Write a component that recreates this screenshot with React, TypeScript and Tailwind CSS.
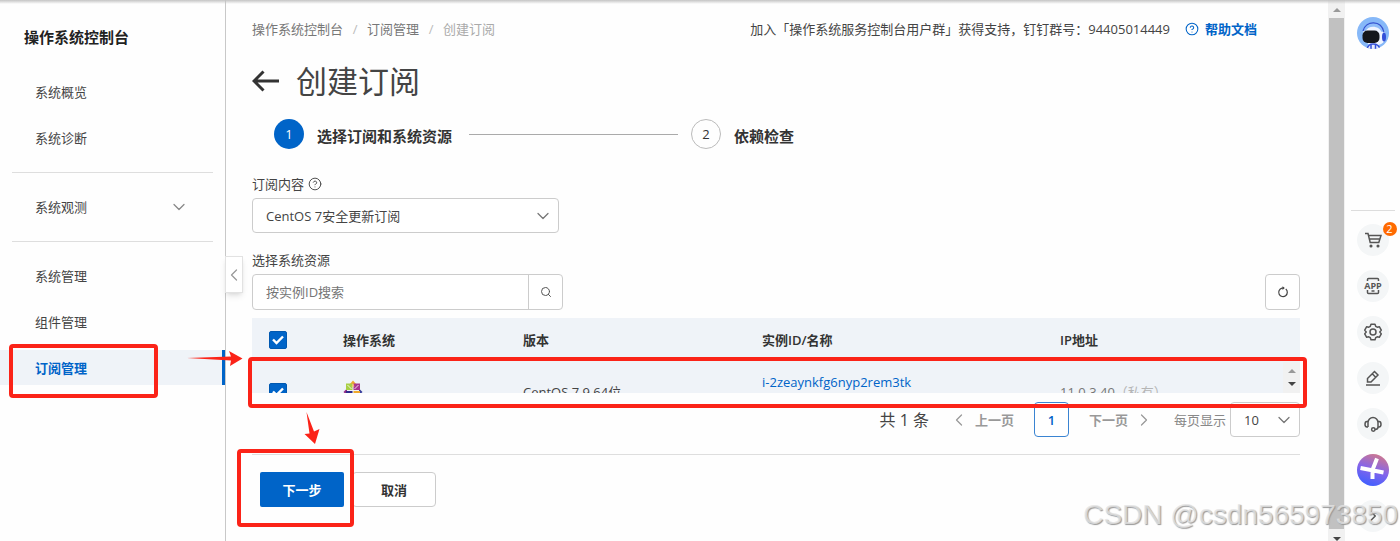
import React, { useState } from "react";
import { ChevronDown, ChevronLeft, ChevronRight, CircleHelp, Search } from "lucide-react";

const navGroups = [
  [{ label: "系统概览" }, { label: "系统诊断" }],
  [{ label: "系统观测", expandable: true }],
  [{ label: "系统管理" }, { label: "组件管理" }, { label: "订阅管理", active: true }],
];

const instances = [
  { id: "i-2zeaynkfg6nyp2rem3tk", version: "CentOS 7.9 64位", ip: "11.0.3.40", scope: "\uFF08私有\uFF09" },
];

const supportNotice = "加入「操作系统服务控制台用户群」获得支持\uFF0C钉钉群号\uFF1A94405014449";

const Sidebar: React.FC = () => (
  <aside className="relative w-[226px] shrink-0 border-r border-[#c8c8c8] pt-[25px]">
    <h2 className="pl-6 text-[15px] font-bold leading-6 text-[#222]">操作系统控制台</h2>
    <nav className="mt-[25px]">
      {navGroups.map((group: any[], index) => (
        <div key={index}>
          {index > 0 && <hr className="mx-3 mb-4 mt-[17px] border-[#dedede]" />}
          <ul className="flex flex-col gap-[11px]">
            {group.map((item) => (
              <li key={item.label} className="relative">
                <a
                  href="#"
                  className={`flex h-[35px] items-center justify-between pl-[35px] pr-9 ${
                    item.active
                      ? "border-r-[3px] border-[#0064c8] bg-[#eff3f8] font-bold text-[#0064c8]"
                      : "text-[#444]"
                  }`}
                >
                  {item.label}
                  {item.expandable && <ChevronDown size={20} strokeWidth={1.5} className="text-[#888]" />}
                </a>
                {item.active && (
                  <>
                    <div className="pointer-events-none absolute -top-1.5 left-[9px] h-[54px] w-[149px] rounded border-4 border-[#fb2318]" />
                    <svg className="pointer-events-none absolute left-[187px] top-0 z-20" width="56" height="18" viewBox="0 0 56 18">
                      <path d="M0 8 L44 6.5 L42 1 L55.5 8.5 L43 16 L44 10.5 Z" fill="#fb2318" />
                    </svg>
                  </>
                )}
              </li>
            ))}
          </ul>
        </div>
      ))}
    </nav>
    <button
      aria-label="收起"
      className="absolute left-[225px] top-64 z-10 flex h-[37px] w-[18px] items-center justify-center border border-[#e2e2e2] bg-white text-[#999] shadow-md"
    >
      <ChevronLeft size={20} strokeWidth={1.5} className="shrink-0" />
    </button>
  </aside>
);

const Checkbox: React.FC<{ label: string }> = ({ label }) => (
  <label className="grid w-[18px]">
    <input
      type="checkbox"
      aria-label={label}
      defaultChecked
      className="peer col-start-1 row-start-1 h-[18px] w-[18px] appearance-none rounded-[2px] border border-[#999] checked:border-[#0058b0] checked:bg-[#0064c8]"
    />
    <svg className="pointer-events-none invisible col-start-1 row-start-1 peer-checked:visible" width="18" height="18" viewBox="0 0 18 18">
      <path d="M4 8.500 L7.500 12 L14 5.500" fill="none" stroke="#fff" strokeWidth="2.4" />
    </svg>
  </label>
);

const CentosLogo: React.FC = () => (
  <svg width="20" height="24" viewBox="0 0 20 24" aria-label="CentOS" role="img">
    <path d="M10 0.500l3.500 4h-7z" fill="#efa92e" />
    <path d="M0.500 12l3.500-3.500v7z" fill="#8f2a86" />
    <path d="M19.500 12l-3.500-3.500v7z" fill="#3a3f9c" />
    <path d="M10 23l3.500-3.500h-7z" fill="#9ccb3b" />
    <path d="M3 3.500h6.500v6.500H3z" fill="#a8cf45" />
    <path d="M10.500 3.500H17v6.500h-6.500z" fill="#a8348f" />
    <path d="M3 11h6.500v8.500H3z" fill="#2f2c8c" />
    <path d="M10.500 11H17v8.500h-6.500z" fill="#efa92e" />
    <path d="M4.500 5l4 4M15.500 5l-4 4" stroke="#fff" strokeWidth="0.8" />
    <path d="M10 3.500l1.500 3h-3z" fill="#f3c06a" />
  </svg>
);

const InstanceTable: React.FC = () => (
  <div className="relative mt-2">
    <div className="h-[75px] overflow-hidden bg-[#eff3f8]">
      <table className="w-full table-fixed text-left">
        <thead>
          <tr className="h-11 text-[#333]">
            <th className="w-[78px] pl-[17px]">
              <Checkbox label="全选" />
            </th>
            <th className="w-[180px] px-[13px] font-semibold">操作系统</th>
            <th className="w-[239px] px-[13px] font-semibold">版本</th>
            <th className="w-[298px] px-[13px] font-semibold">实例ID/名称</th>
            <th className="px-[13px] font-semibold">IP地址</th>
          </tr>
        </thead>
        <tbody>
          {instances.map((item) => (
            <tr key={item.id} className="h-[60px]">
              <td className="pl-[17px]">
                <Checkbox label={item.id} />
              </td>
              <td className="px-[13px]">
                <CentosLogo />
              </td>
              <td className="px-[13px]">{item.version}</td>
              <td className="px-[13px] pt-2.5 align-top">
                <a href="#" className="text-[#0064c8]">{item.id}</a>
              </td>
              <td className="px-[13px] text-[#777]">
                {item.ip}
                <span className="text-[#b5b5b5]">{item.scope}</span>
              </td>
            </tr>
          ))}
        </tbody>
      </table>
    </div>
    {/* list scrollbar */}
    <div className="absolute bottom-0 right-0 flex h-[31px] w-[17px] flex-col items-center justify-center gap-[9px] bg-[#f1f1f1]">
      <span className="border-x-4 border-b-4 border-x-transparent border-b-[#999]" />
      <span className="border-x-4 border-t-4 border-x-transparent border-t-[#444]" />
    </div>
    <div className="pointer-events-none absolute -left-1 -right-[7px] top-[39px] z-10 h-[51px] rounded border-4 border-[#fb2318]" />
    <svg className="pointer-events-none absolute left-[52px] top-[94px] z-10" width="16" height="33" viewBox="0 0 16 33">
      <path d="M2.500 0 L10 19.500 L15.500 17 L11 32 L0.500 22 L5.500 21.500 Z" fill="#fb2318" />
    </svg>
  </div>
);

const Pagination: React.FC = () => (
  <div className="mt-[9px] flex items-center justify-end">
    <span className="text-base">共 1 条</span>
    <button className="ml-5 flex items-center gap-1.5 font-semibold text-[#999]">
      <ChevronLeft size={20} strokeWidth={1.5} />
      上一页
    </button>
    <button className="ml-5 h-[35px] w-[35px] rounded-sm border border-[#3a84d2] bg-white font-semibold text-[#0064c8]">1</button>
    <button className="ml-5 flex items-center gap-1.5 font-semibold text-[#999]">
      下一页
      <ChevronRight size={20} strokeWidth={1.5} />
    </button>
    <label htmlFor="page-size" className="ml-5 text-[#888]">每页显示</label>
    <div className="relative ml-1">
      <select id="page-size" className="h-[35px] w-[70px] appearance-none rounded-sm border border-[#ccc] bg-white pl-[13px]">
        <option>10</option>
        <option>20</option>
      </select>
      <ChevronDown size={20} strokeWidth={1.5} className="pointer-events-none absolute right-1.5 top-2 text-[#777]" />
    </div>
  </div>
);

const PageScrollbar: React.FC = () => (
  <div className="flex w-[17px] shrink-0 flex-col items-center bg-[#f1f1f1] pb-1 pt-2">
    <span className="border-x-4 border-b-4 border-x-transparent border-b-[#999]" />
    <div className="mt-1.5 w-[15px] flex-1 bg-[#c1c1c1]" />
    <span className="-mb-1 mt-2 border-x-4 border-t-4 border-x-transparent border-t-[#444]" />
  </div>
);

const RailButton: React.FC<{ label: string; children: React.ReactNode }> = ({ label, children }) => (
  <button aria-label={label} className="relative flex h-8 w-8 items-center justify-center rounded-full bg-[#f4f6f7] text-[#555]">
    {children}
  </button>
);

const ToolRail: React.FC = () => (
  <aside className="flex w-[55px] shrink-0 flex-col items-center justify-between pb-[9px] pt-[17px]">
    <button aria-label="助手">
      <svg width="32" height="32" viewBox="0 0 32 32">
        <clipPath id="avatar">
          <circle cx="16" cy="16" r="16" />
        </clipPath>
        <g clipPath="url(#avatar)">
          <rect width="32" height="32" fill="#86b8f8" />
          <path d="M6 15C8 4 27 4 28 17v6c-3 6-12 7-17 4z" fill="#eef3ff" />
          <path d="M6 14C9 3 24 3 27 15" fill="#8fbcf9" stroke="#3552d0" strokeWidth="1.2" />
          <path d="M8 15C11 8 22 8 25 16z" fill="#eef3ff" />
          <ellipse cx="27" cy="20" rx="2" ry="4.500" fill="#3350d8" />
          <rect x="5.500" y="13.500" width="17" height="12.500" rx="5" fill="#15171c" />
          <path d="M10 32c1-4 3-5 6-5s6 1 7 5" fill="#e8ecff" stroke="#3350d8" strokeWidth="1.5" />
          <path d="M14 28v4M18.500 28v4" stroke="#3350d8" strokeWidth="1.5" />
        </g>
      </svg>
    </button>
    <div className="flex flex-col items-center gap-3.5 border-t border-[#ddd] px-1.5 pt-[13px]">
      <RailButton label="购物车">
        <svg width="18" height="18" viewBox="0 0 18 18" fill="none" stroke="currentColor" strokeWidth="1.5">
          <path d="M1 2.500h3l2.200 9h8.600L17 4.500H4.500M5.500 8h10.300" />
          <circle cx="7" cy="15" r="0.8" fill="currentColor" />
          <circle cx="14" cy="15" r="0.8" fill="currentColor" />
        </svg>
        <span className="absolute -right-2 -top-0.5 h-3.5 w-3.5 rounded-full bg-[#ff6a00] text-center text-[11px] leading-3.5 text-white">2</span>
      </RailButton>
      <RailButton label="移动端">
        <svg width="20" height="18" viewBox="0 0 20 18" fill="none" stroke="currentColor" strokeWidth="1.5">
          <path d="M4.500 4V2.500q0-1 1-1h9q1 0 1 1V4M4.500 13v2.500q0 1 1 1h9q1 0 1-1V13M8.500 14h3" />
          <text x="10" y="11.500" textAnchor="middle" fontSize="9" fontWeight="700" fill="currentColor" stroke="none">APP</text>
        </svg>
      </RailButton>
      <RailButton label="设置">
        <svg width="18" height="18" viewBox="0 0 18 18" fill="none" stroke="currentColor" strokeWidth="1.5" strokeLinejoin="round">
          <path d="M7 1.200h4l.7 2.100 1.500.9 2.100-.5 2 3.400L15.800 9l1.500 1.900-2 3.400-2.100-.5-1.500.9-.7 2.100H7l-.7-2.100-1.500-.9-2.100.5-2-3.400L2.200 9 .7 7.100l2-3.400 2.100.5 1.500-.9z" />
          <circle cx="9" cy="9" r="3" />
        </svg>
      </RailButton>
      <RailButton label="反馈">
        <svg width="18" height="18" viewBox="0 0 18 18" fill="none" stroke="currentColor" strokeWidth="1.5">
          <path d="M3.500 9.500l7-7 3.500 3.500-7 7H3.500zM8.500 5l3.200 3.200M2 16h14" />
        </svg>
      </RailButton>
      <RailButton label="客服">
        <svg width="18" height="18" viewBox="0 0 18 18" fill="none" stroke="currentColor" strokeWidth="1.5">
          <path d="M4 12V7.500a5 5 0 0 1 10 0V12q0 2.500-3 2.500" />
          <path d="M4 6.500H3q-2 0-2 2.700T3 12h1M14 6.500h1q2 0 2 2.700T15 12h-1" />
          <circle cx="9.300" cy="14.500" r="1.700" />
        </svg>
      </RailButton>
      <button aria-label="新建" className="h-8 w-8">
        <svg width="32" height="32" viewBox="0 0 32 32">
          <defs>
            <linearGradient id="plus" x1="0.7" y1="0" x2="0.35" y2="1">
              <stop offset="0" stopColor="#d0788c" />
              <stop offset="0.5" stopColor="#8565ea" />
              <stop offset="1" stopColor="#3f5fff" />
            </linearGradient>
          </defs>
          <circle cx="16" cy="16" r="16" fill="url(#plus)" />
          <path d="M3.500 14L26.500 18.500M20 4.500L15.500 16V25" fill="none" stroke="#fff" strokeWidth="4" />
        </svg>
      </button>
      <RailButton label="展开">
        <ChevronRight size={18} strokeWidth={2} />
      </RailButton>
    </div>
  </aside>
);

const App: React.FC = () => {
  const [keyword, setKeyword] = useState("");

  return (
    <div
      lang="zh-CN"
      className="relative flex min-h-screen overflow-hidden bg-[#fefefe] font-['Open_Sans','Noto_Sans_CJK_SC',sans-serif] text-[13px] leading-5 text-[#444]"
    >
      <div className="pointer-events-none absolute inset-x-0 top-0 z-20 h-1 bg-linear-to-b from-[#c4c4c4] to-transparent" />
      <Sidebar />

      <main className="min-w-0 flex-1 pl-[26px] pr-7 pt-[19px]">
        <div className="flex items-center justify-between">
          <nav className="flex text-[#777]">
            <a href="#">操作系统控制台</a>
            <span className="w-6 text-center text-[#bbb]">/</span>
            <a href="#">订阅管理</a>
            <span className="w-6 text-center text-[#bbb]">/</span>
            <span className="text-[#aaa]">创建订阅</span>
          </nav>
          <div className="flex items-center pr-[43px]">
            <span>{supportNotice}</span>
            <a href="#" className="ml-[15px] flex items-center gap-1.5 font-bold text-[#0064c8]">
              <CircleHelp size={14} strokeWidth={1.8} />
              帮助文档
            </a>
          </div>
        </div>

        <div className="mt-[22px] flex items-center gap-3">
          <button aria-label="返回">
            <svg width="32" height="28" viewBox="0 0 32 28" fill="none" stroke="#333" strokeWidth="3">
              <path d="M27 14H2M11.500 4.500L2 14l9.500 9.500" />
            </svg>
          </button>
          <h1 className="text-[31px] font-normal leading-10">创建订阅</h1>
        </div>

        <ol className="mt-[18px] flex items-center pl-[22px] text-[15px] text-[#333]">
          <li className="flex items-center gap-[13px]">
            <span className="flex h-[30px] w-[30px] items-center justify-center rounded-full bg-[#0064c8] text-[13px] text-white">1</span>
            <span className="w-[139px] pt-1 font-bold">选择订阅和系统资源</span>
          </li>
          <li className="flex items-center">
            <span className="mx-[13px] h-px w-[209px] bg-[#aaa]" />
            <span className="mr-[13px] flex h-[30px] w-[30px] items-center justify-center rounded-full border border-[#bbb] text-[13px]">2</span>
            <span className="pt-1 font-bold">依赖检查</span>
          </li>
        </ol>

        <div className="mt-[25px] flex items-center gap-1">
          <label htmlFor="subscription">订阅内容</label>
          <CircleHelp size={14} strokeWidth={1.6} />
        </div>
        <div className="relative mt-1 w-[307px]">
          <select id="subscription" className="h-[35px] w-full appearance-none rounded-sm border border-[#ccc] bg-white pl-[13px]">
            <option>CentOS 7安全更新订阅</option>
          </select>
          <ChevronDown size={20} strokeWidth={1.5} className="pointer-events-none absolute right-1.5 top-2 text-[#777]" />
        </div>

        <label htmlFor="resource" className="mt-[17px] block">选择系统资源</label>
        <div className="mt-1 flex justify-between">
          <div className="flex w-[311px] rounded-sm border border-[#ccc] bg-white">
            <input
              id="resource"
              value={keyword}
              onChange={(e) => setKeyword(e.target.value)}
              placeholder="按实例ID搜索"
              className="h-[34px] min-w-0 flex-1 pl-[13px] placeholder:text-[#757575]"
            />
            <button aria-label="搜索" className="flex w-[34px] items-center justify-center border-l border-[#ccc] text-[#555]">
              <Search size={12} strokeWidth={2} />
            </button>
          </div>
          <button aria-label="刷新" className="flex w-[35px] items-center justify-center rounded-sm border border-[#ccc] bg-white">
            <svg width="12" height="12" viewBox="0 0 12 12" fill="none" stroke="#444" strokeWidth="1.2">
              <path d="M8.800 3A4.300 4.300 0 1 1 5 2.100h2" />
              <path d="M5.500 0.300l2.300 1.800-2.300 1.800z" fill="#444" stroke="none" />
            </svg>
          </button>
        </div>

        <InstanceTable />
        <Pagination />

        <div className="mt-[17px] flex gap-2 border-t border-[#dedede] pl-2 pt-[17px]">
          <div className="relative">
            <button className="h-[35px] w-[84px] rounded-[2px] bg-[#0064c8] font-bold text-white">下一步</button>
            <div className="pointer-events-none absolute -left-[23px] -top-[23px] h-[78px] w-[117px] rounded border-4 border-[#fb2318]" />
          </div>
          <button className="h-[35px] w-[84px] rounded-sm border border-[#ccc] bg-white font-bold text-[#333]">取消</button>
        </div>
      </main>

      <PageScrollbar />
      <ToolRail />

      <div className="pointer-events-none absolute bottom-2 right-0.5 z-30 font-['Liberation_Sans',sans-serif] text-[28px] leading-9 text-[#e4e4e4]/80 [text-shadow:1px_1px_1px_#999]">
        CSDN @csdn565973850
      </div>
    </div>
  );
};

export default App;
